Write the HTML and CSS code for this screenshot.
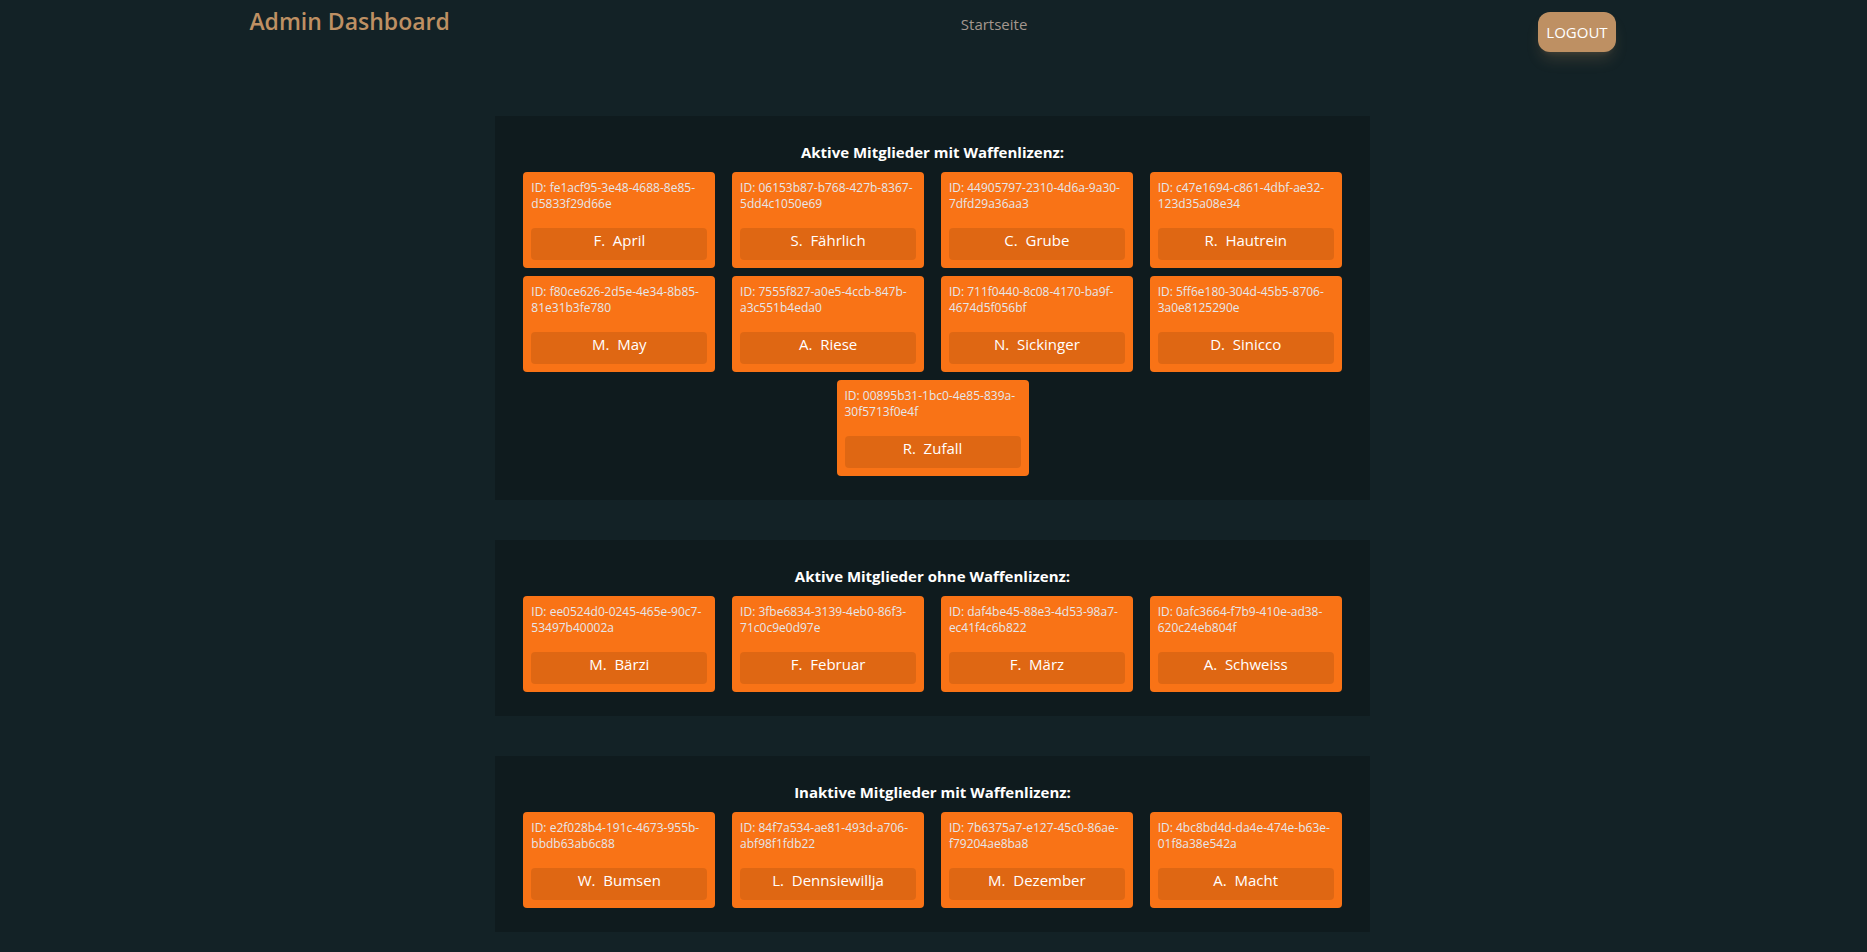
FILE: index.html
```html
<!DOCTYPE html>
<html lang="de">
<head>
<meta charset="utf-8">
<title>Admin Dashboard</title>
<link rel="stylesheet" href="styles.css">
</head>
<body>
<header class="header">
  <h1 class="brand">Admin Dashboard</h1>
  <nav class="nav"><a class="nav-link" href="#">Startseite</a></nav>
  <button class="logout" type="button">LOGOUT</button>
</header>
<main class="main">
  <section class="panel">
    <h2 class="panel-title">Aktive Mitglieder mit Waffenlizenz:</h2>
    <div class="cards">
      <article class="card"><p class="card-id">ID: fe1acf95-3e48-4688-8e85-d5833f29d66e</p><p class="card-name">F.&nbsp; April</p></article>
      <article class="card"><p class="card-id">ID: 06153b87-b768-427b-8367-5dd4c1050e69</p><p class="card-name">S.&nbsp; Fährlich</p></article>
      <article class="card"><p class="card-id">ID: 44905797-2310-4d6a-9a30-7dfd29a36aa3</p><p class="card-name">C.&nbsp; Grube</p></article>
      <article class="card"><p class="card-id">ID: c47e1694-c861-4dbf-ae32-123d35a08e34</p><p class="card-name">R.&nbsp; Hautrein</p></article>
      <article class="card"><p class="card-id">ID: f80ce626-2d5e-4e34-8b85-81e31b3fe780</p><p class="card-name">M.&nbsp; May</p></article>
      <article class="card"><p class="card-id">ID: 7555f827-a0e5-4ccb-847b-a3c551b4eda0</p><p class="card-name">A.&nbsp; Riese</p></article>
      <article class="card"><p class="card-id">ID: 711f0440-8c08-4170-ba9f-4674d5f056bf</p><p class="card-name">N.&nbsp; Sickinger</p></article>
      <article class="card"><p class="card-id">ID: 5ff6e180-304d-45b5-8706-3a0e8125290e</p><p class="card-name">D.&nbsp; Sinicco</p></article>
      <article class="card"><p class="card-id">ID: 00895b31-1bc0-4e85-839a-30f5713f0e4f</p><p class="card-name">R.&nbsp; Zufall</p></article>
    </div>
  </section>
  <section class="panel">
    <h2 class="panel-title">Aktive Mitglieder ohne Waffenlizenz:</h2>
    <div class="cards">
      <article class="card"><p class="card-id">ID: ee0524d0-0245-465e-90c7-53497b40002a</p><p class="card-name">M.&nbsp; Bärzi</p></article>
      <article class="card"><p class="card-id">ID: 3fbe6834-3139-4eb0-86f3-71c0c9e0d97e</p><p class="card-name">F.&nbsp; Februar</p></article>
      <article class="card"><p class="card-id">ID: daf4be45-88e3-4d53-98a7-ec41f4c6b822</p><p class="card-name">F.&nbsp; März</p></article>
      <article class="card"><p class="card-id">ID: 0afc3664-f7b9-410e-ad38-620c24eb804f</p><p class="card-name">A.&nbsp; Schweiss</p></article>
    </div>
  </section>
  <section class="panel">
    <h2 class="panel-title">Inaktive Mitglieder mit Waffenlizenz:</h2>
    <div class="cards">
      <article class="card"><p class="card-id">ID: e2f028b4-191c-4673-955b-bbdb63ab6c88</p><p class="card-name">W.&nbsp; Bumsen</p></article>
      <article class="card"><p class="card-id">ID: 84f7a534-ae81-493d-a706-abf98f1fdb22</p><p class="card-name">L.&nbsp; Dennsiewillja</p></article>
      <article class="card"><p class="card-id">ID: 7b6375a7-e127-45c0-86ae-f79204ae8ba8</p><p class="card-name">M.&nbsp; Dezember</p></article>
      <article class="card"><p class="card-id">ID: 4bc8bd4d-da4e-474e-b63e-01f8a38e542a</p><p class="card-name">A.&nbsp; Macht</p></article>
    </div>
  </section>
</main>
</body>
</html>
```

FILE: styles.css
```css
* {
  box-sizing: border-box;
}

body {
  margin: 0;
  padding-right: 2px;
  background: #132226;
  color: #fff;
  font-family: "Segoe UI", "Open Sans", "Noto Sans", sans-serif;
  font-size: 15px;
  line-height: 24px;
}

h1, h2, p {
  margin: 0;
}

.header {
  display: flex;
  justify-content: space-between;
  align-items: flex-start;
  width: 75vw;
  margin: 0 auto;
  padding: 12px 17px 0;
}

.brand {
  color: #be9063;
  font-size: 23px;
  font-weight: 600;
  line-height: 18px;
}

.nav-link {
  color: #a4978e;
  text-decoration: none;
}

.logout {
  height: 40px;
  padding: 0 8px;
  border: 0;
  border-radius: 12px;
  background: #be9063;
  box-shadow: 0 10px 15px -3px rgba(190, 144, 99, 0.2), 0 4px 6px -4px rgba(190, 144, 99, 0.2);
  color: #fff;
  font: inherit;
  cursor: pointer;
}

.main {
  display: flex;
  flex-direction: column;
  align-items: center;
  gap: 40px;
  width: 75vw;
  margin: 0 auto;
  padding: 64px 0 20px;
}

.panel {
  width: 62.5%;
  padding: 24px 20px;
  background: rgba(0, 0, 0, 0.2);
}

.panel-title {
  margin-bottom: 8px;
  font-size: 15px;
  font-weight: 700;
  line-height: 24px;
  text-align: center;
}

.cards {
  display: flex;
  flex-wrap: wrap;
  justify-content: space-around;
  row-gap: 8px;
}

.card {
  display: flex;
  flex-direction: column;
  gap: 16px;
  width: 192px;
  padding: 8px;
  border-radius: 4px;
  background: #f97316;
}

.card-id {
  color: #e5e7eb;
  font-size: 12px;
  line-height: 16px;
}

.card-name {
  min-height: 32px;
  border-radius: 4px;
  background: rgba(0, 0, 0, 0.1);
  text-align: center;
}
```
